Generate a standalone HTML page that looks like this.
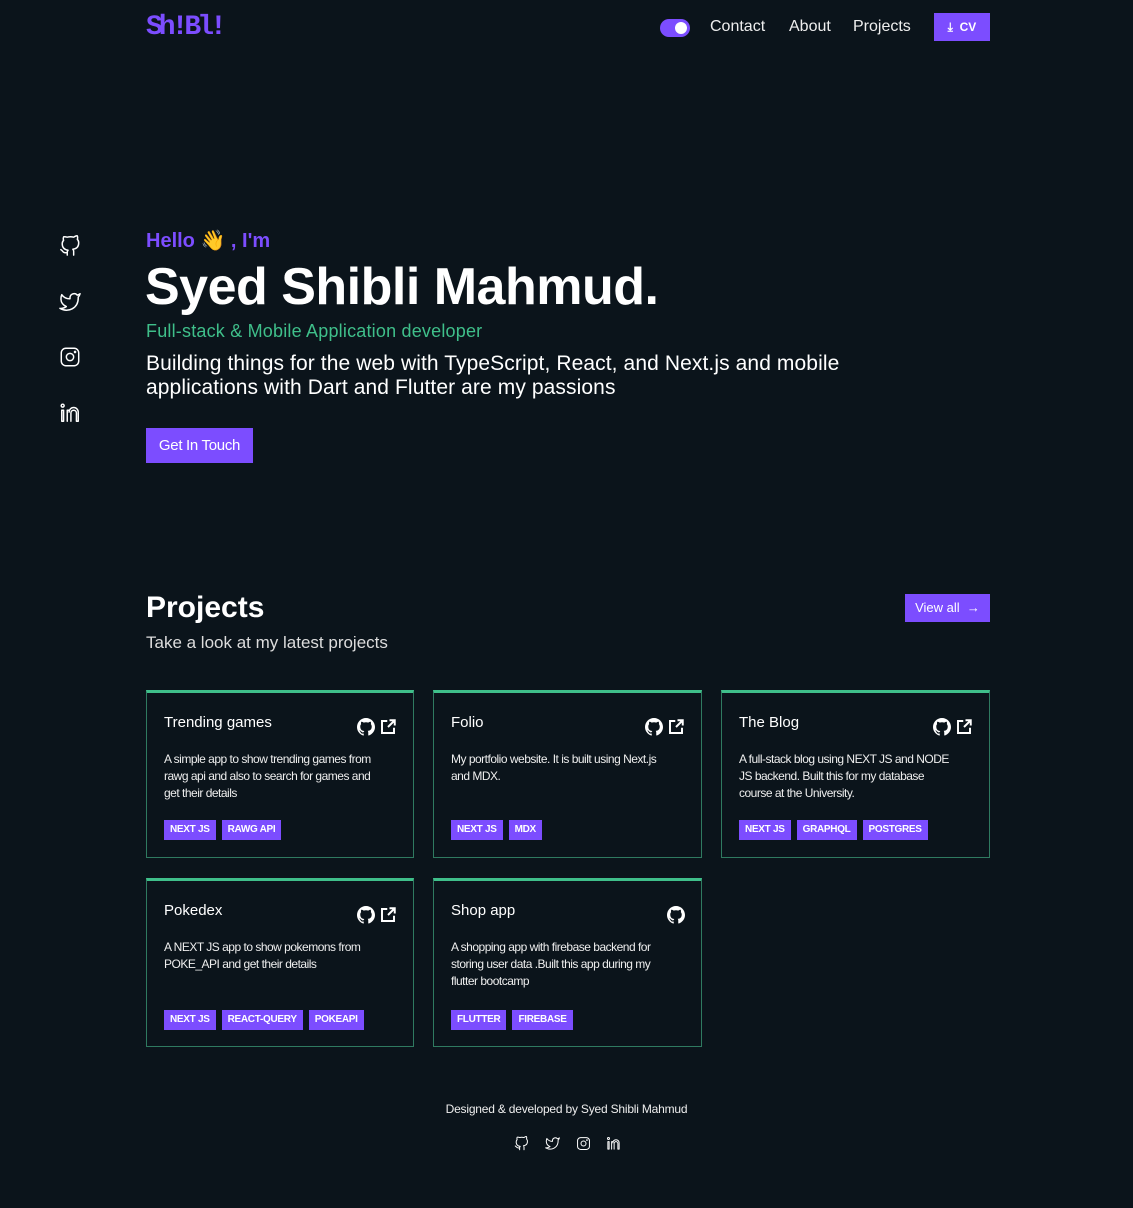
<!DOCTYPE html>
<html><head><meta charset="utf-8">
<style>
*{margin:0;padding:0;box-sizing:border-box}
body{width:1133px;height:1208px;background:#0b141b;color:#fff;font-family:"Liberation Sans",sans-serif;position:relative;overflow:hidden}
.a{position:absolute}
.logo{left:146px;top:12px;font-family:"Liberation Mono",monospace;font-weight:bold;font-size:28px;color:#7c4dff;letter-spacing:-4px}
.nav{top:18px;font-size:16px;color:#eee}
.cv{left:934px;top:13px;width:56px;height:28px;background:#7c4dff;font-size:12px;font-weight:bold;text-align:center;line-height:28px}
.toggle{left:660px;top:19px;width:30px;height:18px;border-radius:9px;background:#7c4dff}
.toggle:after{content:"";position:absolute;right:3px;top:3px;width:12px;height:12px;border-radius:50%;background:#fff}
.soc svg{width:22px;height:22px;stroke:#fff;fill:none;stroke-width:1.6;stroke-linecap:round;stroke-linejoin:round}
.card{position:absolute;border:1px solid #2f7a60;border-top:3px solid #3fbf8a;background:#0b141b}
.card h3{position:absolute;left:17px;top:21px;font-size:15px;font-weight:normal;color:#fff}
.card p{position:absolute;left:17px;top:58px;width:212px;font-size:12px;line-height:17px;letter-spacing:-0.5px;color:#eee}
.tags{position:absolute;left:17px}
.tags span{display:inline-block;background:#7c4dff;font-size:10px;height:20px;line-height:20px;padding:0 6px;margin-right:6px;color:#fff;letter-spacing:-0.3px;font-weight:bold}
.ic{position:absolute;top:25px;right:16px}
.ic svg{width:18px;height:18px;margin-left:4px}
</style></head><body>
<svg width="0" height="0" style="position:absolute">
<symbol id="gh" viewBox="0 0 24 24"><path d="M9 19c-5 1.5-5-2.5-7-3m14 6v-3.9a3.4 3.4 0 0 0-.9-2.6c3.1-.3 6.4-1.5 6.4-7a5.4 5.4 0 0 0-1.5-3.8 5 5 0 0 0-.1-3.8s-1.2-.3-3.9 1.5a13.4 13.4 0 0 0-7 0C6.3 1.6 5.1 2 5.1 2a5 5 0 0 0-.1 3.8 5.4 5.4 0 0 0-1.5 3.8c0 5.4 3.3 6.6 6.4 7a3.4 3.4 0 0 0-.9 2.6V22"/></symbol>
<symbol id="tw" viewBox="0 0 24 24"><path d="M23 3a10.9 10.9 0 0 1-3.1 1.5 4.5 4.5 0 0 0-7.9 3v1A10.7 10.7 0 0 1 3 4s-4 9 5 13a11.6 11.6 0 0 1-7 2c9 5 20 0 20-11.5a4.5 4.5 0 0 0-.1-.8A7.7 7.7 0 0 0 23 3z"/></symbol>
<symbol id="ig" viewBox="0 0 24 24"><rect x="2.5" y="2.5" width="19" height="19" rx="5"/><circle cx="12" cy="12" r="4"/><circle cx="17.5" cy="6.5" r=".6"/></symbol>
<symbol id="li" viewBox="0 0 24 24"><circle cx="4" cy="4" r="1.6"/><path d="M3 9h2v12H3zM9 21V9h2m0 2a5 5 0 0 1 10 0v10h-2V12a3 3 0 0 0-6 0v9"/></symbol>
<symbol id="ghf" viewBox="0 0 16 16"><path fill="#fff" d="M8 0C3.6 0 0 3.6 0 8c0 3.5 2.3 6.5 5.5 7.6.4.1.5-.2.5-.4v-1.4c-2.2.5-2.7-1-2.7-1-.4-.9-.9-1.2-.9-1.2-.7-.5.1-.5.1-.5.8.1 1.2.8 1.2.8.7 1.2 1.9.9 2.3.7.1-.5.3-.9.5-1.1-1.8-.2-3.6-.9-3.6-4 0-.9.3-1.6.8-2.1-.1-.2-.4-1 .1-2.1 0 0 .7-.2 2.200.8a7.5 7.5 0 0 1 4 0c1.5-1 2.2-.8 2.2-.8.4 1.1.2 1.9.1 2.1.5.6.8 1.3.8 2.1 0 3.1-1.9 3.7-3.6 3.9.3.3.5.8.5 1.5v2.2c0 .2.1.5.6.4A8 8 0 0 0 16 8c0-4.4-3.6-8-8-8z"/></symbol>
<symbol id="ext" viewBox="0 0 24 24"><path fill="none" stroke="#fff" stroke-width="2.6" d="M11 4H4v16h16v-7M12 12l9-9M14 3h7v7"/></symbol>
</svg>

<div class="a logo">Sh!Bl!</div>
<div class="a toggle"></div>
<div class="a nav" style="left:710px">Contact</div>
<div class="a nav" style="left:789px">About</div>
<div class="a nav" style="left:853px">Projects</div>
<div class="a cv">⤓&nbsp; CV</div>

<div class="a soc" style="left:59px;top:235px"><svg><use href="#gh"/></svg></div>
<div class="a soc" style="left:59px;top:291px"><svg><use href="#tw"/></svg></div>
<div class="a soc" style="left:59px;top:346px"><svg><use href="#ig"/></svg></div>
<div class="a soc" style="left:59px;top:402px"><svg><use href="#li"/></svg></div>

<div class="a" style="left:146px;top:228px;font-size:20px;font-weight:bold;color:#7c4dff">Hello 👋 , I'm</div>
<div class="a" style="left:145px;top:257px;font-size:52px;font-weight:bold;letter-spacing:-0.5px">Syed Shibli Mahmud.</div>
<div class="a" style="left:146px;top:321px;font-size:18px;color:#3fbf8a;letter-spacing:0.2px">Full-stack &amp; Mobile Application developer</div>
<div class="a" style="left:146px;top:352px;font-size:21px;line-height:24px;width:760px;letter-spacing:0.1px">Building things for the web with TypeScript, React, and Next.js and mobile applications with Dart and Flutter are my passions</div>
<div class="a" style="left:146px;top:428px;width:107px;height:35px;background:#7c4dff;font-size:15px;line-height:35px;text-align:center;letter-spacing:-0.3px">Get In Touch</div>

<div class="a" style="left:146px;top:591px;font-size:30px;font-weight:bold">Projects</div>
<div class="a" style="left:146px;top:633px;font-size:17px;color:#ddd">Take a look at my latest projects</div>
<div class="a" style="left:905px;top:594px;width:85px;height:28px;background:#7c4dff;font-size:13px;line-height:28px;text-align:center">View all &nbsp;→</div>

<div class="card" style="left:146px;top:690px;width:268px;height:168px"><h3>Trending games</h3><div class="ic"><svg><use href="#ghf"/></svg><svg><use href="#ext"/></svg></div><p>A simple app to show trending games from rawg api and also to search for games and get their details</p><div class="tags" style="top:126px"><span>NEXT JS</span><span>RAWG API</span></div></div>
<div class="card" style="left:433px;top:690px;width:269px;height:168px"><h3>Folio</h3><div class="ic"><svg><use href="#ghf"/></svg><svg><use href="#ext"/></svg></div><p>My portfolio website. It is built using Next.js and MDX.</p><div class="tags" style="top:126px"><span>NEXT JS</span><span>MDX</span></div></div>
<div class="card" style="left:721px;top:690px;width:269px;height:168px"><h3>The Blog</h3><div class="ic"><svg><use href="#ghf"/></svg><svg><use href="#ext"/></svg></div><p>A full-stack blog using NEXT JS and NODE JS backend. Built this for my database course at the University.</p><div class="tags" style="top:126px"><span>NEXT JS</span><span>GRAPHQL</span><span>POSTGRES</span></div></div>
<div class="card" style="left:146px;top:878px;width:268px;height:169px"><h3>Pokedex</h3><div class="ic"><svg><use href="#ghf"/></svg><svg><use href="#ext"/></svg></div><p>A NEXT JS app to show pokemons from POKE_API and get their details</p><div class="tags" style="top:128px"><span>NEXT JS</span><span>REACT-QUERY</span><span>POKEAPI</span></div></div>
<div class="card" style="left:433px;top:878px;width:269px;height:169px"><h3>Shop app</h3><div class="ic"><svg><use href="#ghf"/></svg></div><p>A shopping app with firebase backend for storing user data .Built this app during my flutter bootcamp</p><div class="tags" style="top:128px"><span>FLUTTER</span><span>FIREBASE</span></div></div>

<div class="a" style="left:0;width:1133px;text-align:center;top:1102px;font-size:12px;color:#eee;letter-spacing:-0.2px">Designed &amp; developed by Syed Shibli Mahmud</div>
<div class="a soc" style="left:514px;top:1136px"><svg style="width:15px;height:15px"><use href="#gh"/></svg></div>
<div class="a soc" style="left:545px;top:1136px"><svg style="width:15px;height:15px"><use href="#tw"/></svg></div>
<div class="a soc" style="left:576px;top:1136px"><svg style="width:15px;height:15px"><use href="#ig"/></svg></div>
<div class="a soc" style="left:606px;top:1136px"><svg style="width:15px;height:15px"><use href="#li"/></svg></div>
</body></html>
